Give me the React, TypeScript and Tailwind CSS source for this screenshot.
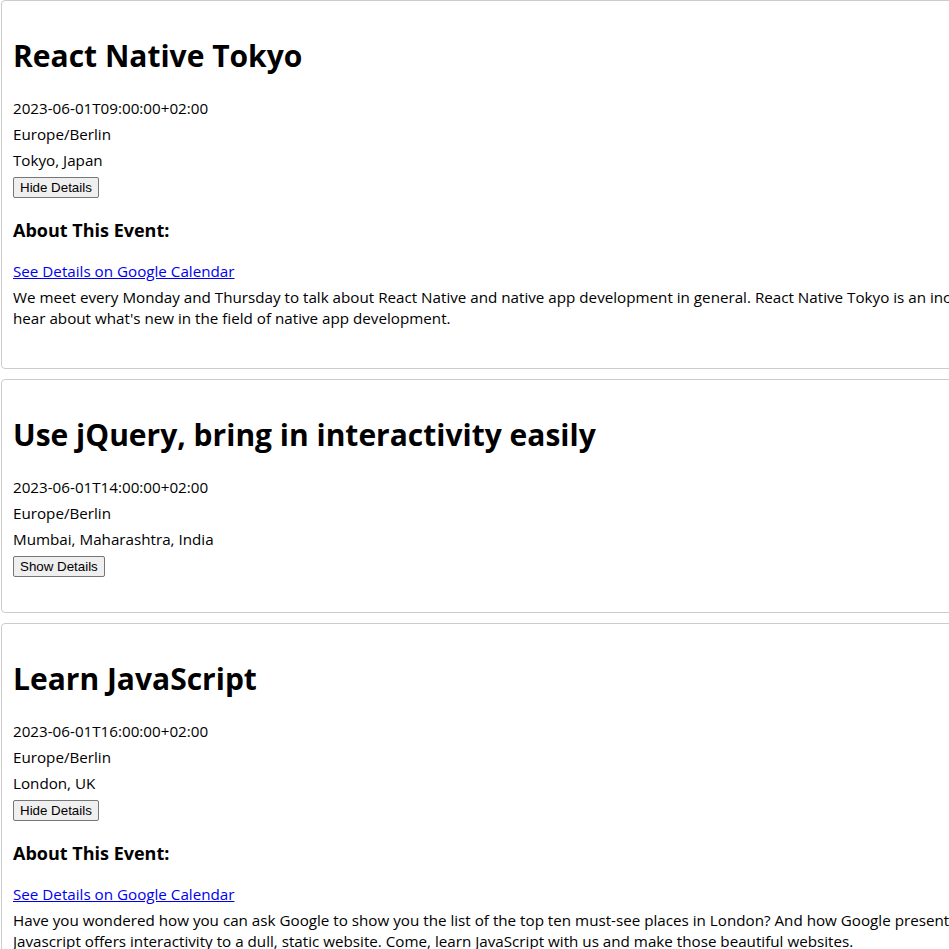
import React, { useState } from "react";

interface EventItem {
  title: string;
  start: string;
  timezone: string;
  location: string;
  description: string;
  open: boolean;
}

const events: EventItem[] = [
  {
    title: "React Native Tokyo",
    start: "2023-06-01T09:00:00+02:00",
    timezone: "Europe/Berlin",
    location: "Tokyo, Japan",
    description:
      "We meet every Monday and Thursday to talk about React Native and native app development in general. React Native Tokyo is an inclusive meetup for all who want to hear about what's new in the field of native app development.",
    open: true,
  },
  {
    title: "Use jQuery, bring in interactivity easily",
    start: "2023-06-01T14:00:00+02:00",
    timezone: "Europe/Berlin",
    location: "Mumbai, Maharashtra, India",
    description:
      "jQuery is a fast, small and feature-rich JavaScript library that makes DOM manipulation simple.",
    open: false,
  },
  {
    title: "Learn JavaScript",
    start: "2023-06-01T16:00:00+02:00",
    timezone: "Europe/Berlin",
    location: "London, UK",
    description:
      "Have you wondered how you can ask Google to show you the list of the top ten must-see places in London? And how Google presents it in such a clean, neat way? Javascript offers interactivity to a dull, static website. Come, learn JavaScript with us and make those beautiful websites.",
    open: true,
  },
];

const EventCard: React.FC<{ event: EventItem }> = ({ event }) => {
  const [open, setOpen] = useState(event.open);

  return (
    <div className="ml-px mb-[10px] w-[1221px] rounded-[4px] border border-[#cccccc] px-[11px] pt-[10px] pb-[10px]">
      <h1 className="mt-[23px] mb-[18px] text-[30px] leading-[43px] font-bold text-black">
        {event.title}
      </h1>
      <div className="text-[15.2px] leading-[26px] text-black">{event.start}</div>
      <div className="text-[15.2px] leading-[26px] text-black">{event.timezone}</div>
      <div className="text-[15.2px] leading-[26px] text-black">{event.location}</div>
      <button
        className={
          open
            ? "mt-[4px] block h-[21px] rounded-[2px] border border-[#767676] bg-[#efefef] px-[6px] text-[13.33px] leading-[17px] text-black"
            : "mt-[4px] mb-[25px] block h-[21px] rounded-[2px] border border-[#767676] bg-[#efefef] px-[6px] text-[13.33px] leading-[17px] text-black"
        }
        style={{ fontFamily: '"Liberation Sans", Arial, sans-serif' }}
        onClick={() => setOpen(!open)}
      >
        {open ? "Hide Details" : "Show Details"}
      </button>
      {open && (
        <div className="pb-[29px]">
          <h3 className="mt-[20px] mb-[18px] text-[18px] leading-[25px] font-bold text-black">
            About This Event:
          </h3>
          <a href="#" className="block w-max text-[15.2px] leading-[21px] text-[#0000ee] underline">
            See Details on Google Calendar
          </a>
          <p className="mt-[5px] text-[15.2px] leading-[21px] text-black">{event.description}</p>
        </div>
      )}
    </div>
  );
};

export default function App() {
  return (
    <div
      className="min-h-screen w-full overflow-hidden bg-white"
      style={{ fontFamily: '"Open Sans", "Noto Sans", sans-serif' }}
    >
      {events.map((event) => (
        <EventCard key={event.title} event={event} />
      ))}
    </div>
  );
}
